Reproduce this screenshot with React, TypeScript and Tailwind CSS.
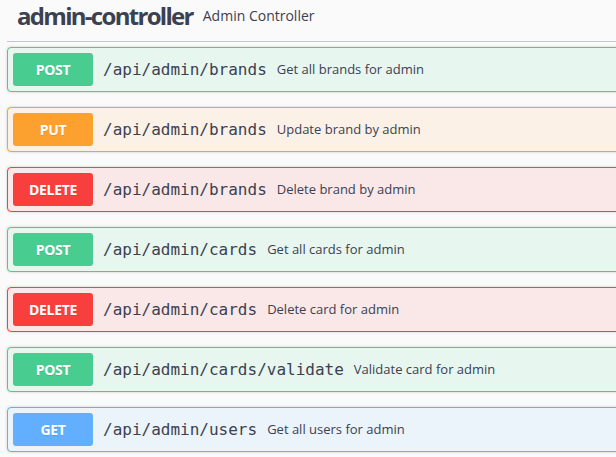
import React from 'react'

type Method = 'POST' | 'PUT' | 'DELETE' | 'GET'

const ops: { method: Method; path: string; summary: string }[] = [
  { method: 'POST', path: '/api/admin/brands', summary: 'Get all brands for admin' },
  { method: 'PUT', path: '/api/admin/brands', summary: 'Update brand by admin' },
  { method: 'DELETE', path: '/api/admin/brands', summary: 'Delete brand by admin' },
  { method: 'POST', path: '/api/admin/cards', summary: 'Get all cards for admin' },
  { method: 'DELETE', path: '/api/admin/cards', summary: 'Delete card for admin' },
  { method: 'POST', path: '/api/admin/cards/validate', summary: 'Validate card for admin' },
  { method: 'GET', path: '/api/admin/users', summary: 'Get all users for admin' },
]

// full class strings per method so tailwind picks them up
const STYLE: Record<Method, { block: string; badge: string }> = {
  POST: { block: 'border-[#49cc90] bg-[#e8f6f0]', badge: 'bg-[#49cc90]' },
  PUT: { block: 'border-[#fca130] bg-[#fbf1e6]', badge: 'bg-[#fca130]' },
  DELETE: { block: 'border-[#f93e3e] bg-[#fae7e7]', badge: 'bg-[#f93e3e]' },
  GET: { block: 'border-[#61affe] bg-[#ebf3fb]', badge: 'bg-[#61affe]' },
}

function OpBlock({ method, path, summary }: { method: Method; path: string; summary: string }) {
  const s = STYLE[method]
  return (
    <div className={`mb-[15px] rounded border shadow-[0_0_3px_rgba(0,0,0,0.19)] ${s.block}`}>
      <div className="flex items-center p-[5px]">
        <span
          className={`w-20 rounded-[3px] py-[6px] text-center font-['Open_Sans',sans-serif] text-[14px] leading-[21px] font-bold tracking-[-0.3px] text-white [text-shadow:0_1px_0_rgba(0,0,0,0.1)] ${s.badge}`}
        >
          {method}
        </span>
        <span className="px-[10px] font-['DejaVu_Sans_Mono',monospace] text-[16px] text-[#3b4151]">
          {path}
        </span>
        <span className="font-['Open_Sans',sans-serif] text-[13px] text-[#3b4151]">{summary}</span>
      </div>
    </div>
  )
}

export default function App() {
  return (
    <div className="h-[457px] w-[616px] overflow-hidden bg-white">
      <div className="h-full w-[640px] bg-[#fafafa] pl-[7px]">
        <h3 className="mb-[5px] flex h-[42px] items-center border-b border-[#c4c6cb] px-[10px] pb-[10px] text-[#3b4151]">
          <span className="font-['Open_Sans',sans-serif] text-[24px] leading-[30px] font-bold tracking-[-1.7px]">
            admin-controller
          </span>
          <small className="px-[10px] font-['Open_Sans',sans-serif] text-[14px]">Admin Controller</small>
        </h3>
        {ops.map((o, i) => (
          <OpBlock key={i} {...o} />
        ))}
      </div>
    </div>
  )
}
